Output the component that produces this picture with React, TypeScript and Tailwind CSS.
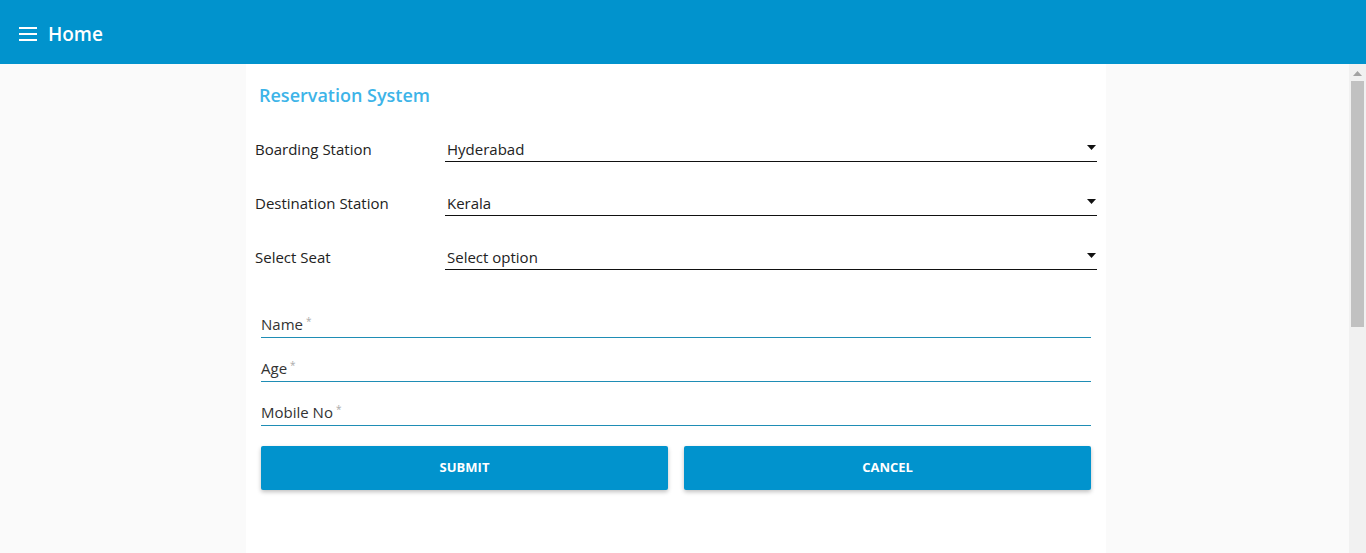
const font = { fontFamily: '"Open Sans", "Noto Sans", Arial, sans-serif' };

interface SelectRowProps {
  label: string;
  value: string;
}

const SelectRow = ({ label, value }: SelectRowProps) => (
  <div className="flex h-[54px] items-end">
    <div className="w-[190px] pb-[2px] text-[15px] leading-[22px] text-[#222]">{label}</div>
    <div className="flex h-[26px] flex-1 items-center justify-between border-b border-[#111] pl-[2px]">
      <span className="text-[15px] leading-[22px] text-[#222]">{value}</span>
      <svg width="9" height="5" viewBox="0 0 9 5" className="mr-[1px] mb-[2px]">
        <path d="M0 0h9L4.5 5z" fill="#111" />
      </svg>
    </div>
  </div>
);

const TextField = ({ label }: { label: string }) => (
  <div className="flex h-[44px] items-end border-b border-[#1f8db5]">
    <span className="pb-[1px] text-[15px] leading-[20px] text-[#333]">
      {label}
      <span className="relative -top-[5px] ml-[3px] text-[10px] text-[#aaa]">*</span>
    </span>
  </div>
);

export default function App() {
  return (
    <div className="flex h-[553px] w-[1366px] flex-col overflow-hidden bg-[#fafafa]" style={font}>
      {/* Toolbar */}
      <header className="flex h-16 shrink-0 items-center gap-[11px] bg-[#0193cd] px-[19px] pt-1 text-white">
        <svg width="18" height="14" viewBox="0 0 18 14">
          <path d="M0 1h18M0 7h18M0 13h18" stroke="#fff" strokeWidth="2" />
        </svg>
        <span className="text-[19px] font-semibold">Home</span>
      </header>

      <div className="flex flex-1">
        <main className="flex-1">
          <div className="ml-[246px] h-full w-[860px] bg-white px-[9px]">
            <h1 className="mb-[1px] pt-[19px] pl-[4px] text-[18px] font-semibold leading-[24px] text-[#3db4e8]">
              Reservation System
            </h1>

            <SelectRow label="Boarding Station" value="Hyderabad" />
            <SelectRow label="Destination Station" value="Kerala" />
            <SelectRow label="Select Seat" value="Select option" />

            <div className="mt-[24px] px-[6px]">
              <TextField label="Name" />
              <TextField label="Age" />
              <TextField label="Mobile No" />

              <div className="mt-[20px] grid grid-cols-2 gap-4">
                <button className="h-[44px] rounded-[2px] bg-[#0193cd] text-[13px] font-bold text-white shadow-[0_2px_4px_rgba(0,0,0,0.25)]">
                  SUBMIT
                </button>
                <button className="h-[44px] rounded-[2px] bg-[#0193cd] text-[13px] font-bold text-white shadow-[0_2px_4px_rgba(0,0,0,0.25)]">
                  CANCEL
                </button>
              </div>
            </div>
          </div>
        </main>

        {/* Scrollbar */}
        <div className="flex w-[17px] flex-col items-center bg-[#f1f1f1]">
          <svg width="9" height="5" viewBox="0 0 9 5" className="mt-[7px]">
            <path d="M4.5 0L9 5H0z" fill="#a3a3a3" />
          </svg>
          <div className="mt-[5px] h-[246px] w-[13px] bg-[#c1c1c1]" />
        </div>
      </div>
    </div>
  );
}
